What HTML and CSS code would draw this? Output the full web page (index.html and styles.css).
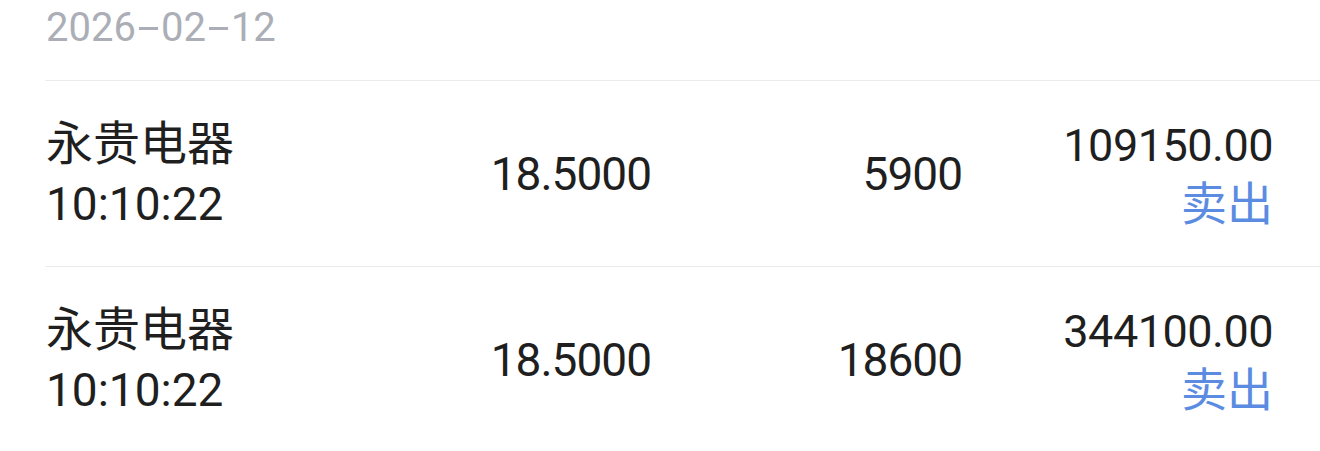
FILE: index.html
```html
<!DOCTYPE html>
<html lang="zh-CN">
<head>
<meta charset="utf-8">
<link rel="stylesheet" href="styles.css">
</head>
<body>
<div class="list">
  <div class="date">2026<span class="dash">-</span>02<span class="dash">-</span>12</div>
  <div class="row">
    <div class="cell name"><div class="title">永贵电器</div><div>10:10:22</div></div>
    <div class="cell num">18.5000</div>
    <div class="cell num">5900</div>
    <div class="cell amt"><div>109150.00</div><div class="side">卖出</div></div>
  </div>
  <div class="row">
    <div class="cell name"><div class="title">永贵电器</div><div>10:10:22</div></div>
    <div class="cell num">18.5000</div>
    <div class="cell num">18600</div>
    <div class="cell amt"><div>344100.00</div><div class="side">卖出</div></div>
  </div>
</div>
</body>
</html>
```

FILE: styles.css
```css
html, body {
  margin: 0;
  padding: 0;
  background: #ffffff;
}
body {
  font-family: Roboto, "Noto Sans CJK SC", sans-serif;
  color: #1f1f1f;
  overflow: hidden;
}
.list {
  padding-left: 45px;
}
.date {
  font-size: 40px;
  line-height: 55px;
  height: 80px;
  color: #abaeb6;
  padding-left: 1px;
}
.dash {
  display: inline-block;
  width: 25px;
  text-align: center;
  transform: scaleX(2);
}
.row {
  display: grid;
  grid-template-columns: 1fr 311px 311px 311px;
  align-items: center;
  border-top: 1px solid #ececec;
  height: 185px;
  padding-right: 47px;
  font-size: 46px;
  line-height: 59px;
}
.cell {
  padding-top: 2px;
}
.name {
  padding-left: 1px;
}
.title {
  font-size: 47px;
  margin-top: -2px;
  margin-bottom: 2px;
}
.num {
  text-align: right;
  letter-spacing: -1px;
}
.amt {
  text-align: right;
  font-size: 45px;
  letter-spacing: -0.5px;
}
.side {
  color: #5b8ce2;
  letter-spacing: 0;
  font-size: 46px;
}
```
